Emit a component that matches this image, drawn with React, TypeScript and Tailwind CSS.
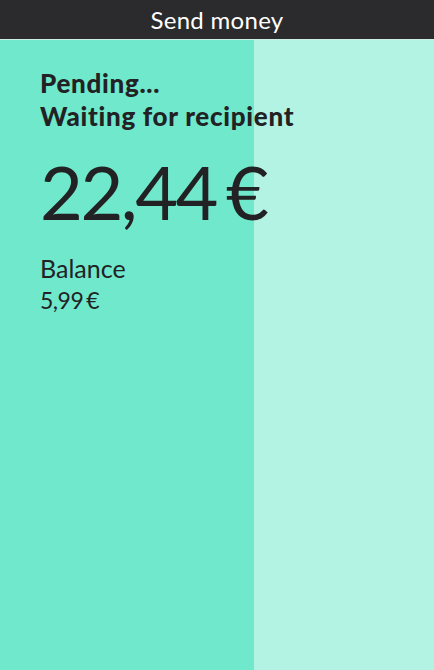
import React from 'react';

const App: React.FC = () => {
  return (
    <div className="w-[434px] h-[670px] flex flex-col overflow-hidden" style={{ fontFamily: 'Lato, "Noto Sans", sans-serif' }}>
      <header className="h-[39px] bg-[#2b2b2d] flex items-center justify-center shrink-0">
        <h1 className="text-white text-[24px] leading-none tracking-[0.3px]">Send money</h1>
      </header>
      <div className="grid flex-1 border-t border-[#cdeee5]">
        {/* progress fill behind the content */}
        <div className="[grid-area:1/1] flex">
          <div className="w-[254px] bg-[#6fe8cb]" />
          <div className="flex-1 bg-[#b3f3e3]" />
        </div>
        <div className="[grid-area:1/1] pl-[40px] pt-[27px] text-[#222225]">
          <p className="text-[26px] font-black leading-[33px] tracking-[0.7px]">Pending...</p>
          <p className="text-[26px] font-black leading-[33px] tracking-[0.7px] whitespace-nowrap">Waiting for recipient</p>
          <p className="mt-[14px] text-[74px] leading-[90px] whitespace-nowrap">
            <span className="tracking-[-2.5px]">22,44</span>
            <span className="ml-[10px]">€</span>
          </p>
          <p className="mt-[15px] text-[25px] leading-[32px]">Balance</p>
          <p className="text-[23px] leading-[32px] whitespace-nowrap">
            <span className="tracking-[-0.5px]">5,99</span>
            <span className="ml-[3px]">€</span>
          </p>
        </div>
      </div>
    </div>
  );
};

export default App;
